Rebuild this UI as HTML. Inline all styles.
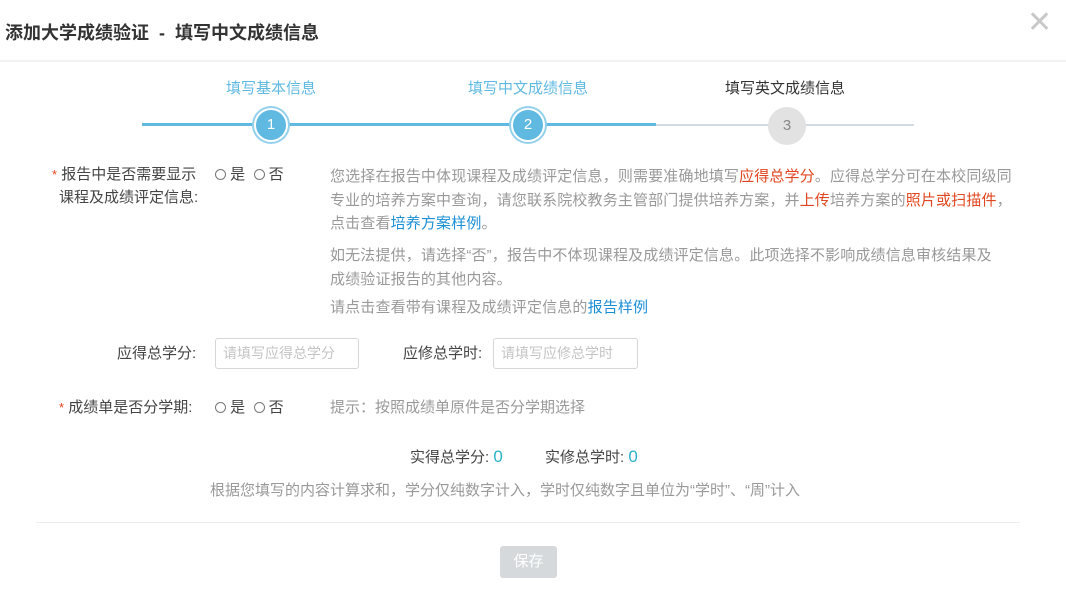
<!DOCTYPE html>
<html><head><meta charset="utf-8"><style>
*{margin:0;padding:0;box-sizing:border-box}
body{width:1066px;height:608px;background:#fff;font-family:"Liberation Sans","Noto Sans CJK SC",sans-serif;position:relative;overflow:hidden;color:#555}
.a{position:absolute;white-space:nowrap}
.t{font-size:15px;line-height:20px}
.g{color:#999}
.r{color:#e0461f}
.b{color:#1b8fd6}
.rad{display:inline-block;width:11px;height:11px;border:1px solid #777;border-radius:50%;vertical-align:-1px}
.star{color:#e0461f;font-size:13px}
.inp{position:absolute;border:1px solid #d6d6d6;border-radius:3px;height:31px;font-size:14px;color:#c4c4c4;padding:6px 7px;line-height:17px}
.c{position:absolute;width:34px;height:34px;border-radius:50%;text-align:center;line-height:34px;font-size:15px}
.c.on{background:#5fb9e1;color:#fff;box-shadow:0 0 0 2px #fff,0 0 0 4px #93d0ec;width:30px;height:30px;line-height:30px}
</style></head><body>
<div class="a" style="left:5px;top:19px;font-size:18px;font-weight:bold;color:#333">添加大学成绩验证 &nbsp;-&nbsp; 填写中文成绩信息</div>
<div class="a" style="left:1027px;top:8px;font-size:30px;color:#c8c8c8;line-height:30px">✕</div>
<div class="a" style="left:0;top:60px;width:1066px;height:2px;background:#f2f2f2"></div>

<div class="a" style="left:142px;top:123px;width:514px;height:3px;background:#5fb9e1"></div>
<div class="a" style="left:656px;top:124px;width:258px;height:2px;background:#d3dbe5"></div>
<div class="a t" style="left:226px;top:79px;color:#5fb9e1">填写基本信息</div>
<div class="a t" style="left:468px;top:79px;color:#5fb9e1">填写中文成绩信息</div>
<div class="a t" style="left:725px;top:79px;color:#333">填写英文成绩信息</div>
<div class="c on" style="left:256px;top:110px">1</div>
<div class="c on" style="left:513px;top:110px">2</div>
<div class="c" style="left:768px;top:107px;background:#e2e2e2;color:#888;width:38px;height:38px;line-height:38px">3</div>

<div class="a t" style="left:52px;top:165px;color:#444"><span class="star">*</span> 报告中是否需要显示</div>
<div class="a t" style="left:59px;top:188px;color:#444">课程及成绩评定信息:</div>
<div class="a t" style="left:215px;top:165px;color:#444"><span class="rad"></span> 是 &nbsp;<span class="rad"></span> 否</div>

<div class="a t g" style="left:330px;top:165px;line-height:23.5px;letter-spacing:0.15px">您选择在报告中体现课程及成绩评定信息，则需要准确地填写<span class="r">应得总学分</span>。应得总学分可在本校同级同<br>专业的培养方案中查询，请您联系院校教务主管部门提供培养方案，并<span class="r">上传</span>培养方案的<span class="r">照片或扫描件</span>，<br>点击查看<span class="b">培养方案样例</span>。</div>
<div class="a t g" style="left:330px;top:244px;line-height:23.5px;letter-spacing:0.15px">如无法提供，请选择“否”，报告中不体现课程及成绩评定信息。此项选择不影响成绩信息审核结果及<br>成绩验证报告的其他内容。</div>
<div class="a t g" style="left:330px;top:298px;letter-spacing:0.15px">请点击查看带有课程及成绩评定信息的<span class="b">报告样例</span></div>

<div class="a t" style="left:117px;top:344px;color:#444">应得总学分:</div>
<div class="inp" style="left:215px;top:338px;width:144px">请填写应得总学分</div>
<div class="a t" style="left:403px;top:344px;color:#444">应修总学时:</div>
<div class="inp" style="left:493px;top:338px;width:145px">请填写应修总学时</div>

<div class="a t" style="left:59px;top:398px;color:#444"><span class="star">*</span> 成绩单是否分学期:</div>
<div class="a t" style="left:215px;top:398px;color:#444"><span class="rad"></span> 是 &nbsp;<span class="rad"></span> 否</div>
<div class="a t g" style="left:330px;top:398px">提示：按照成绩单原件是否分学期选择</div>

<div class="a t" style="left:410px;top:447px;color:#444">实得总学分: <span style="color:#2bb0c9;font-size:17px">0</span></div>
<div class="a t" style="left:545px;top:447px;color:#444">实修总学时: <span style="color:#2bb0c9;font-size:17px">0</span></div>
<div class="a t g" style="left:210px;top:481px">根据您填写的内容计算求和，学分仅纯数字计入，学时仅纯数字且单位为“学时”、“周”计入</div>

<div class="a" style="left:36px;top:522px;width:984px;height:1px;background:#ececec"></div>
<div class="a" style="left:500px;top:546px;width:57px;height:32px;background:#d5d9dc;border-radius:3px;color:#fff;font-size:15px;text-align:center;line-height:32px">保存</div>
</body></html>
